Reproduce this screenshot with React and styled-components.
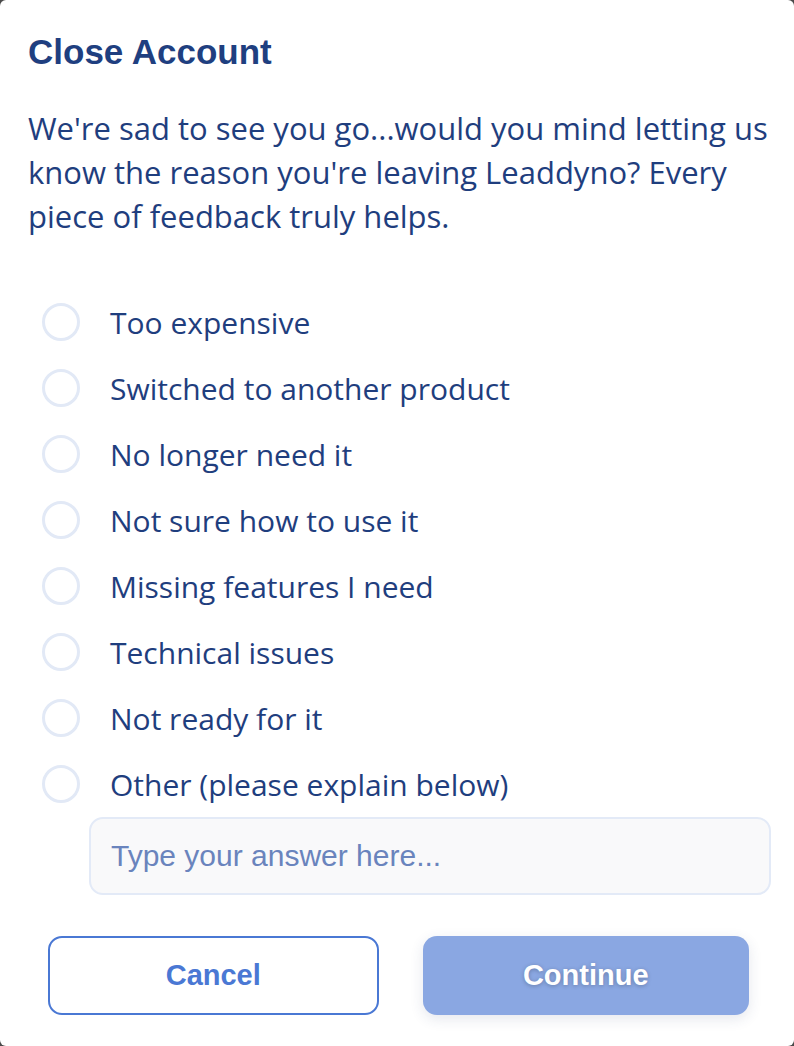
import React, { useState } from 'react';
import styled, { createGlobalStyle } from 'styled-components';

const GlobalStyle = createGlobalStyle`
  html, body {
    margin: 0;
    padding: 0;
    background: #4a4a4a;
  }
  * {
    box-sizing: border-box;
  }
`;

const Card = styled.div`
  width: 794px;
  height: 1046px;
  background: #fff;
  border-radius: 6px;
  padding: 30px 23px 0 28px;
  display: flex;
  flex-direction: column;
  font-family: "Open Sans", "Noto Sans", sans-serif;
  color: #1f3e7e;
`;

const Title = styled.h1`
  margin: 0;
  font-family: "Liberation Sans", Arial, sans-serif;
  font-size: 35px;
  line-height: 44px;
  font-weight: 700;
  color: #1f3f80;
`;

const Description = styled.p`
  margin: 32px 0 0;
  font-size: 31px;
  line-height: 44px;
  font-weight: 400;
`;

const OptionList = styled.div`
  display: flex;
  flex-direction: column;
  margin-top: 51px;
  padding-left: 14px;
`;

const OptionRow = styled.label`
  display: flex;
  align-items: center;
  gap: 30px;
  height: 66px;
  font-size: 30px;
  cursor: pointer;
`;

const Radio = styled.span`
  width: 38px;
  height: 38px;
  flex: none;
  border-radius: 50%;
  border: 3px solid ${(p) => (p.checked ? '#4a78d4' : '#e2e9f6')};
  background: ${(p) => (p.checked ? 'radial-gradient(circle, #4a78d4 40%, #fff 42%)' : '#fff')};
`;

const AnswerInput = styled.input`
  margin: 0 0 0 61px;
  height: 78px;
  border-radius: 14px;
  border: 2px solid #e3eaf7;
  background: #f9f9fa;
  padding: 0 20px;
  font-family: "Liberation Sans", Arial, sans-serif;
  font-size: 30px;
  color: #1f3e7e;
  outline: none;
  &::placeholder {
    color: #6a84bd;
  }
`;

const ButtonRow = styled.div`
  display: flex;
  gap: 44px;
  margin-top: 41px;
  padding: 0 22px 0 20px;
`;

const Button = styled.button`
  flex: 1;
  height: 79px;
  border-radius: 14px;
  font-family: "Liberation Sans", Arial, sans-serif;
  font-size: 29px;
  font-weight: 700;
  cursor: pointer;
`;

const CancelButton = styled(Button)`
  background: #fff;
  border: 2px solid #4a78d4;
  color: #4a78d4;
`;

const ContinueButton = styled(Button)`
  background: #8aa7e2;
  border: none;
  color: #fff;
  text-shadow: 0 1px 4px rgba(0, 0, 0, 0.25);
  box-shadow: 0 4px 14px rgba(40, 60, 110, 0.12);
`;

const reasons = [
  'Too expensive',
  'Switched to another product',
  'No longer need it',
  'Not sure how to use it',
  'Missing features I need',
  'Technical issues',
  'Not ready for it',
  'Other (please explain below)',
];

export default function App() {
  const [selected, setSelected] = useState(null);

  return (
    <>
      <GlobalStyle />
      <Card>
        <Title>Close Account</Title>
        <Description>
          We're sad to see you go...would you mind letting us know the reason you're leaving
          Leaddyno? Every piece of feedback truly helps.
        </Description>
        <OptionList>
          {reasons.map((reason, idx) => (
            <OptionRow key={idx} onClick={() => setSelected(idx)}>
              <Radio checked={selected === idx} />
              {reason}
            </OptionRow>
          ))}
        </OptionList>
        <AnswerInput placeholder="Type your answer here..." />
        <ButtonRow>
          <CancelButton>Cancel</CancelButton>
          <ContinueButton disabled={selected === null}>Continue</ContinueButton>
        </ButtonRow>
      </Card>
    </>
  );
}
